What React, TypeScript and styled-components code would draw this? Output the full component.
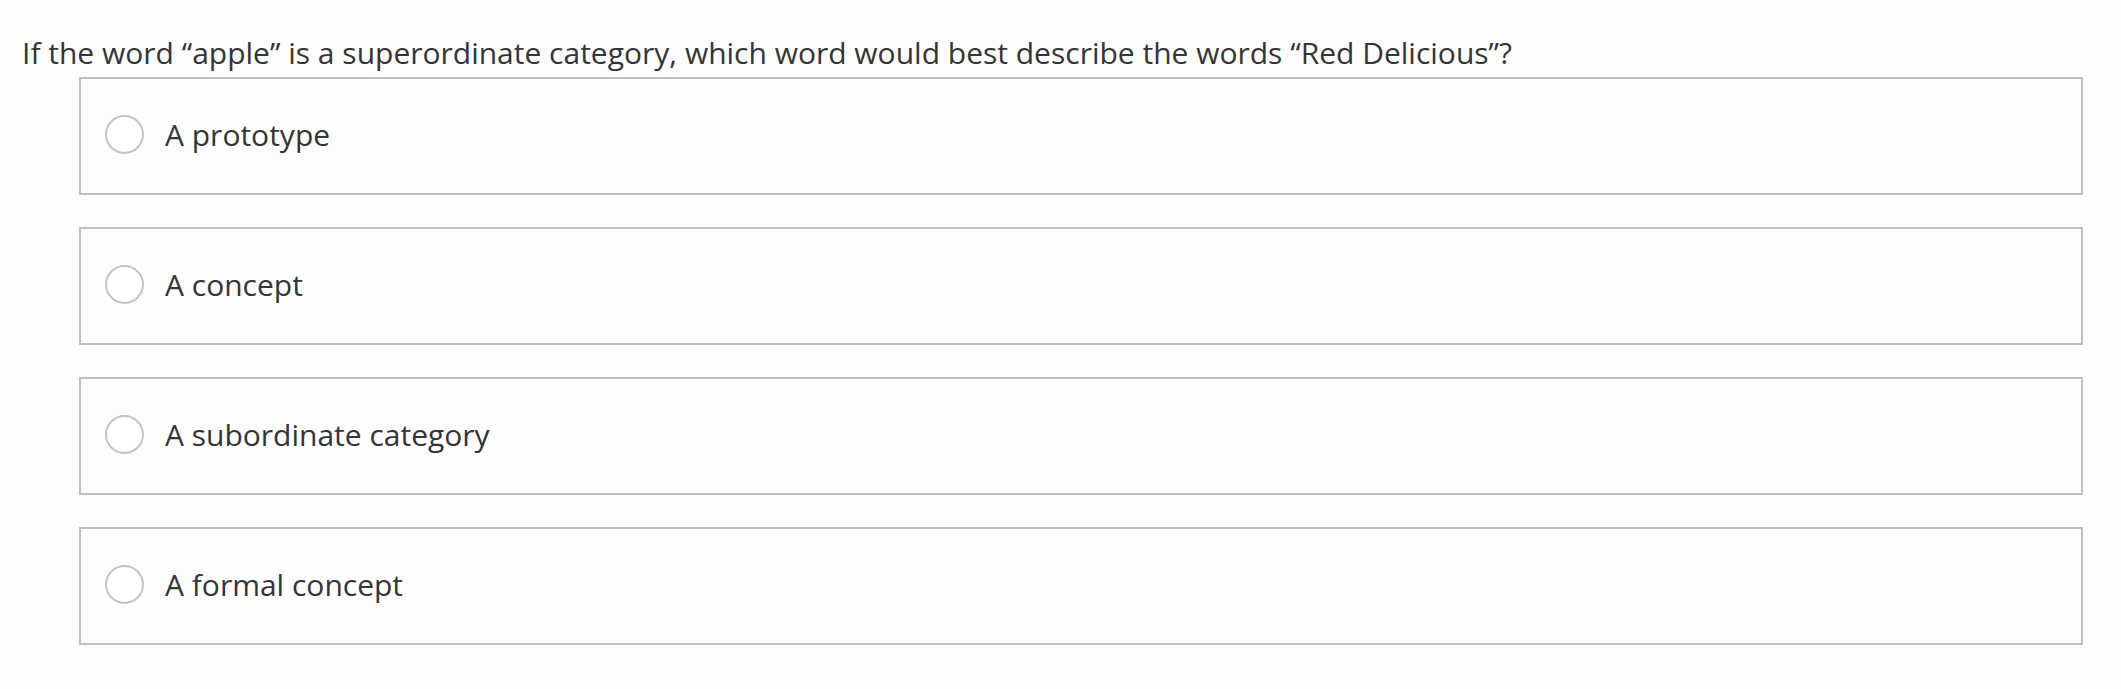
import React from "react";
import styled, { createGlobalStyle } from "styled-components";

const GlobalStyle = createGlobalStyle`
  html, body {
    margin: 0;
    padding: 0;
    background: #fdfdfd;
  }
  body {
    font-family: "Open Sans", "Liberation Sans", sans-serif;
    color: #353535;
  }
`;

const Page = styled.div`
  padding: 35px 38px 40px 22px;
`;

const Question = styled.div`
  font-size: 30px;
  line-height: 36px;
  margin: 0 0 6px 0;
`;

const Options = styled.div`
  display: flex;
  flex-direction: column;
  gap: 32px;
  margin-left: 57px;
`;

const Option = styled.label`
  box-sizing: border-box;
  display: flex;
  align-items: center;
  height: 118px;
  border: 2px solid #c0c0c0;
  background: #fdfdfd;
  padding: 0 0 3px 24px;
  cursor: pointer;
`;

const Radio = styled.span`
  box-sizing: border-box;
  width: 39px;
  height: 39px;
  border-radius: 50%;
  border: 2px solid #c4c4c4;
  background: #ffffff;
  flex: none;
`;

const Label = styled.span`
  font-size: 30px;
  line-height: 40px;
  margin-left: 21px;
`;

const answers = [
  "A prototype",
  "A concept",
  "A subordinate category",
  "A formal concept",
];

export default function App() {
  return (
    <>
      <GlobalStyle />
      <Page>
        <Question>
          If the word “apple” is a superordinate category, which word would best
          describe the words “Red Delicious”?
        </Question>
        <Options>
          {answers.map((a) => (
            <Option key={a}>
              <Radio />
              <Label>{a}</Label>
            </Option>
          ))}
        </Options>
      </Page>
    </>
  );
}
